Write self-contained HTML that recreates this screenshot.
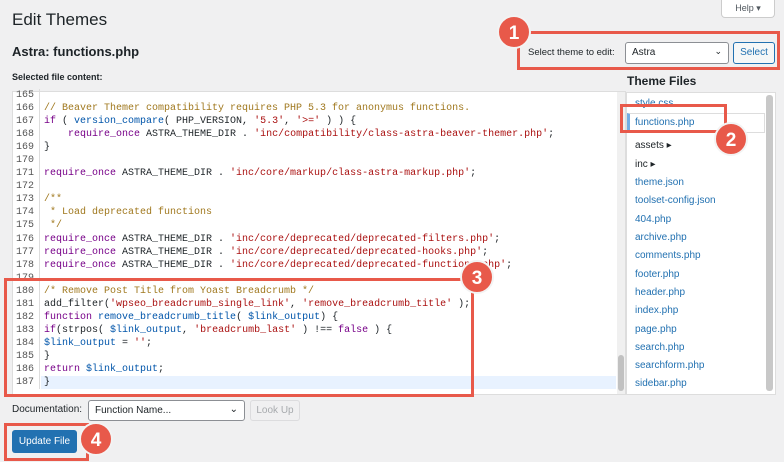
<!DOCTYPE html>
<html><head><style>
*{margin:0;padding:0;box-sizing:border-box}
body{width:784px;height:462px;background:#f0f0f1;font-family:"Liberation Sans",sans-serif;position:relative;overflow:hidden;color:#1d2327}
.a{position:absolute}
.code{font-family:"Liberation Mono",monospace;font-size:10px;line-height:13.05px;white-space:pre}
.ln{color:#555;width:28px;text-align:right;display:inline-block;padding-right:5px;border-right:1px solid #ddd;margin-right:4px}
.c{color:#a0781e}.k{color:#770088}.s{color:#aa1111}.v{color:#0055aa}.d{color:#222}
.files div{height:18.3px;font-size:10px;color:#2271b1;padding-left:9px;line-height:18px}
.red{border:3px solid #e8594a}
.circ{background:#e8594a;border-radius:50%;color:#fff;font-weight:bold;font-size:19px;text-align:center;width:34px;height:34px;line-height:34px;border:2px solid #f3f3f3}
</style></head><body>
<div class="a" style="left:12px;top:10px;font-size:17px">Edit Themes</div>
<div class="a" style="left:12px;top:44px;font-size:13px;font-weight:bold">Astra: functions.php</div>
<div class="a" style="left:12px;top:72px;font-size:9px;font-weight:bold">Selected file content:</div>
<div class="a" style="left:721px;top:0;width:54px;height:18px;background:#fff;border:1px solid #ccc;border-top:none;border-radius:0 0 4px 4px;font-size:9px;color:#50575e;text-align:center;line-height:16px">Help ▾</div>
<div class="a" style="left:528px;top:47px;font-size:9.5px;color:#1d2327">Select theme to edit:</div>
<div class="a" style="left:625px;top:42px;width:104px;height:22px;background:#fff;border:1px solid #8c8f94;border-radius:3px;font-size:10px;padding:4px 6px">Astra<span style="position:absolute;right:6px;top:3px;font-size:9px">⌄</span></div>
<div class="a" style="left:733px;top:42px;width:42px;height:22px;border:1px solid #2271b1;border-radius:3px;background:#f6f7f7;color:#2271b1;font-size:10px;text-align:center;line-height:20px">Select</div>
<div class="a" style="left:627px;top:74px;font-size:12px;font-weight:bold">Theme Files</div>
<div class="a" style="left:12px;top:91px;width:614px;height:304px;background:#fff;border:1px solid #ddd"></div>
<div class="a" style="left:41px;top:376px;width:575px;height:13px;background:#e8f2ff"></div>
<div class="a" style="left:617px;top:92px;width:8px;height:302px;background:#f0f0f0"></div>
<div class="a" style="left:618px;top:355px;width:6px;height:36px;background:#c1c1c1;border-radius:3px"></div>
<div class="a code" style="left:12px;top:89px;width:600px;height:304px;overflow:hidden"><span class="ln">165</span>
<span class="ln">166</span><span class="c">// Beaver Themer compatibility requires PHP 5.3 for anonymus functions.</span>
<span class="ln">167</span><span class="k">if</span> ( <span class="v">version_compare</span>( PHP_VERSION, <span class="s">'5.3'</span>, <span class="s">'&gt;='</span> ) ) {
<span class="ln">168</span>    <span class="k">require_once</span> ASTRA_THEME_DIR . <span class="s">'inc/compatibility/class-astra-beaver-themer.php'</span>;
<span class="ln">169</span>}
<span class="ln">170</span>
<span class="ln">171</span><span class="k">require_once</span> ASTRA_THEME_DIR . <span class="s">'inc/core/markup/class-astra-markup.php'</span>;
<span class="ln">172</span>
<span class="ln">173</span><span class="c">/**</span>
<span class="ln">174</span><span class="c"> * Load deprecated functions</span>
<span class="ln">175</span><span class="c"> */</span>
<span class="ln">176</span><span class="k">require_once</span> ASTRA_THEME_DIR . <span class="s">'inc/core/deprecated/deprecated-filters.php'</span>;
<span class="ln">177</span><span class="k">require_once</span> ASTRA_THEME_DIR . <span class="s">'inc/core/deprecated/deprecated-hooks.php'</span>;
<span class="ln">178</span><span class="k">require_once</span> ASTRA_THEME_DIR . <span class="s">'inc/core/deprecated/deprecated-functions.php'</span>;
<span class="ln">179</span>
<span class="ln">180</span><span class="c">/* Remove Post Title from Yoast Breadcrumb */</span>
<span class="ln">181</span>add_filter(<span class="s">'wpseo_breadcrumb_single_link'</span>, <span class="s">'remove_breadcrumb_title'</span> );
<span class="ln">182</span><span class="k">function</span> <span class="v">remove_breadcrumb_title</span>( <span class="v">$link_output</span>) {
<span class="ln">183</span><span class="k">if</span>(strpos( <span class="v">$link_output</span>, <span class="s">'breadcrumb_last'</span> ) !== <span class="k">false</span> ) {
<span class="ln">184</span><span class="v">$link_output</span> = <span class="s">''</span>;
<span class="ln">185</span>}
<span class="ln">186</span><span class="k">return</span> <span class="v">$link_output</span>;
<span class="ln">187</span>}</div>
<div class="a" style="left:626px;top:92px;width:150px;height:303px;background:#fff;border:1px solid #ddd"></div>
<div class="a" style="left:766px;top:95px;width:7px;height:296px;background:#c8c8c8;border-radius:3px"></div>
<div class="a" style="left:627px;top:113px;width:138px;height:20px;background:#fff;border:1px solid #ddd;border-left:3px solid #72aee6"></div>
<div class="a files" style="left:626px;top:95px;width:138px;height:298px;overflow:hidden">
<div>style.css</div><div style="padding-left:9px;margin-top:1px">functions.php</div><div style="color:#1d2327;margin-top:4px">assets ▸</div><div style="color:#1d2327;margin-top:1px">inc ▸</div><div>theme.json</div><div>toolset-config.json</div><div>404.php</div><div>archive.php</div><div>comments.php</div><div>footer.php</div><div>header.php</div><div>index.php</div><div>page.php</div><div>search.php</div><div>searchform.php</div><div>sidebar.php</div></div>
<div class="a" style="left:12px;top:404px;font-size:10px">Documentation:</div>
<div class="a" style="left:88px;top:400px;width:157px;height:21px;background:#fff;border:1px solid #8c8f94;border-radius:3px;font-size:10px;padding:4px 6px">Function Name...<span style="position:absolute;right:6px;top:3px">⌄</span></div>
<div class="a" style="left:250px;top:400px;width:50px;height:21px;border:1px solid #dcdcde;border-radius:3px;color:#a7aaad;font-size:10px;text-align:center;line-height:19px">Look Up</div>
<div class="a" style="left:12px;top:430px;width:65px;height:23px;background:#2271b1;border-radius:3px;color:#fff;font-size:10px;text-align:center;line-height:23px">Update File</div>
<div class="a red" style="left:517px;top:31px;width:263px;height:39px"></div>
<div class="a red" style="left:620px;top:104px;width:107px;height:29px"></div>
<div class="a red" style="left:4px;top:278px;width:470px;height:119px"></div>
<div class="a red" style="left:4px;top:423px;width:85px;height:38px"></div>
<div class="a circ" style="left:497px;top:15px">1</div>
<div class="a circ" style="left:714px;top:122px">2</div>
<div class="a circ" style="left:460px;top:260px">3</div>
<div class="a circ" style="left:79px;top:422px">4</div>
</body></html>
